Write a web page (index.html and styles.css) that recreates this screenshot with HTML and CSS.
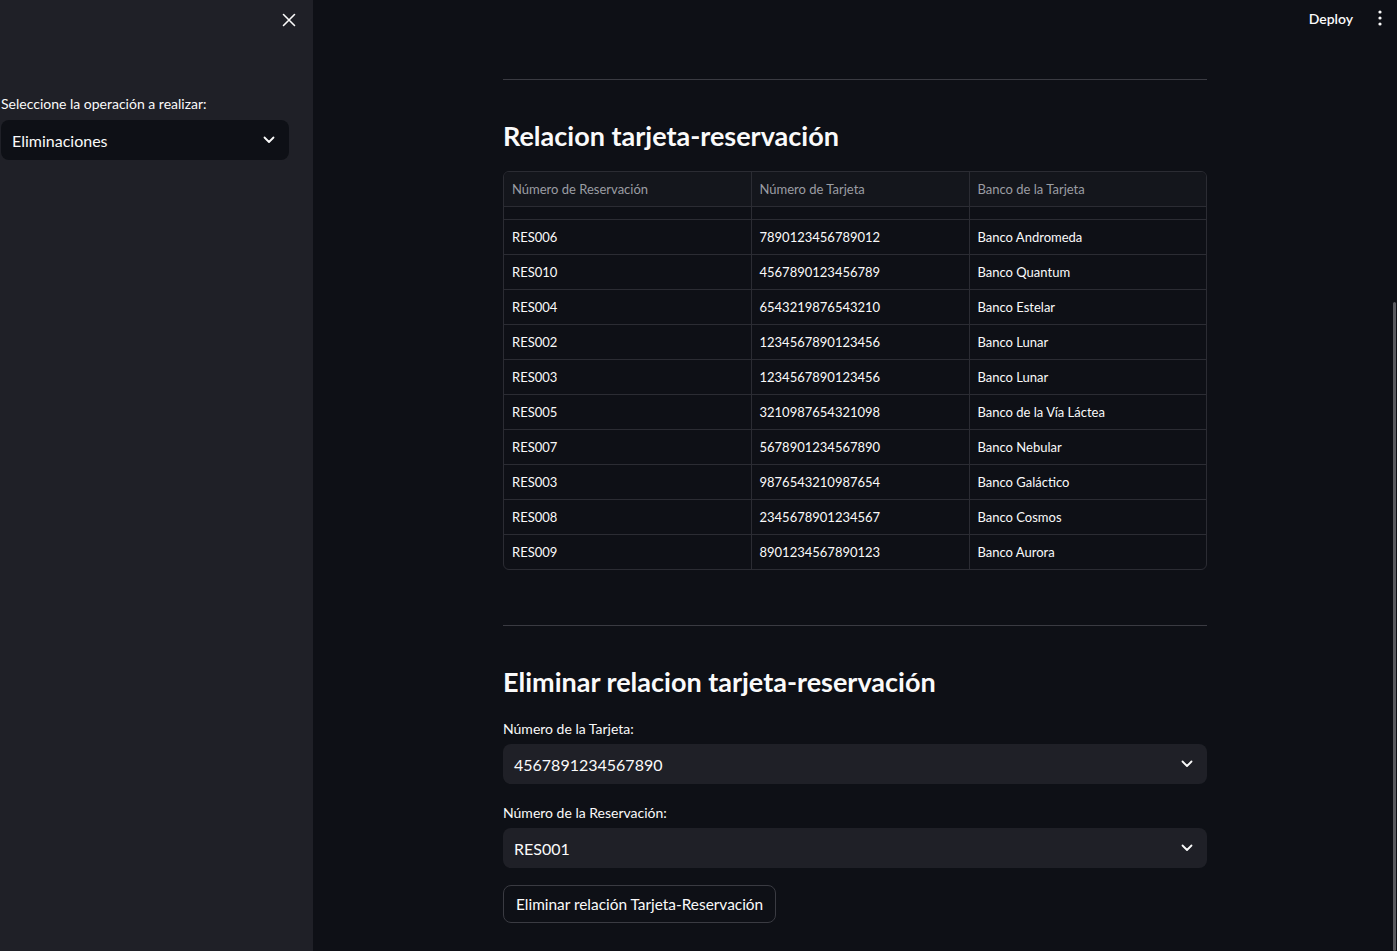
FILE: index.html
```html
<!DOCTYPE html>
<html lang="es">
<head>
<meta charset="utf-8">
<title>App</title>
<link rel="stylesheet" href="styles.css">
</head>
<body>
<div class="app">
  <aside class="sidebar">
    <div class="sidebar-top">
      <button class="close-btn" aria-label="Cerrar">
        <svg width="14" height="14" viewBox="0 0 14 14"><path d="M1.5 1.5L12.5 12.5M12.5 1.5L1.5 12.5" stroke="#fafafa" stroke-width="1.6" stroke-linecap="round"/></svg>
      </button>
    </div>
    <div class="sidebar-content">
      <label class="field-label">Seleccione la operación a realizar:</label>
      <div class="select select-dark">
        <span>Eliminaciones</span>
        <svg class="chev" width="12" height="8" viewBox="0 0 12 8"><path d="M1.5 1.5L6 6L10.5 1.5" stroke="#fafafa" stroke-width="1.8" fill="none" stroke-linecap="round" stroke-linejoin="round"/></svg>
      </div>
    </div>
  </aside>
  <main class="main">
    <header class="topbar">
      <span class="deploy">Deploy</span>
      <svg class="kebab" width="4" height="16" viewBox="0 0 4 16"><circle cx="2" cy="2" r="1.6" fill="#fafafa"/><circle cx="2" cy="8" r="1.6" fill="#fafafa"/><circle cx="2" cy="14" r="1.6" fill="#fafafa"/></svg>
    </header>
    <div class="content">
      <hr class="divider first">
      <h3 class="heading">Relacion tarjeta-reservación</h3>
      <div class="table-wrap">
        <table class="grid">
          <thead>
            <tr><th class="c1">Número de Reservación</th><th class="c2">Número de Tarjeta</th><th class="c3">Banco de la Tarjeta</th></tr>
          </thead>
          <tbody>
            <tr class="spacer"><td></td><td></td><td></td></tr>
            <tr><td>RES006</td><td>7890123456789012</td><td>Banco Andromeda</td></tr>
            <tr><td>RES010</td><td>4567890123456789</td><td>Banco Quantum</td></tr>
            <tr><td>RES004</td><td>6543219876543210</td><td>Banco Estelar</td></tr>
            <tr><td>RES002</td><td>1234567890123456</td><td>Banco Lunar</td></tr>
            <tr><td>RES003</td><td>1234567890123456</td><td>Banco Lunar</td></tr>
            <tr><td>RES005</td><td>3210987654321098</td><td>Banco de la Vía Láctea</td></tr>
            <tr><td>RES007</td><td>5678901234567890</td><td>Banco Nebular</td></tr>
            <tr><td>RES003</td><td>9876543210987654</td><td>Banco Galáctico</td></tr>
            <tr><td>RES008</td><td>2345678901234567</td><td>Banco Cosmos</td></tr>
            <tr class="last"><td>RES009</td><td>8901234567890123</td><td>Banco Aurora</td></tr>
          </tbody>
        </table>
      </div>
      <hr class="divider second">
      <h3 class="heading h-second">Eliminar relacion tarjeta-reservación</h3>
      <label class="field-label main-label">Número de la Tarjeta:</label>
      <div class="select select-light">
        <span>4567891234567890</span>
        <svg class="chev" width="12" height="8" viewBox="0 0 12 8"><path d="M1.5 1.5L6 6L10.5 1.5" stroke="#fafafa" stroke-width="1.8" fill="none" stroke-linecap="round" stroke-linejoin="round"/></svg>
      </div>
      <label class="field-label main-label second-label">Número de la Reservación:</label>
      <div class="select select-light">
        <span>RES001</span>
        <svg class="chev" width="12" height="8" viewBox="0 0 12 8"><path d="M1.5 1.5L6 6L10.5 1.5" stroke="#fafafa" stroke-width="1.8" fill="none" stroke-linecap="round" stroke-linejoin="round"/></svg>
      </div>
      <button class="btn">Eliminar relación Tarjeta-Reservación</button>
    </div>
    <div class="scrollbar"></div>
  </main>
</div>
</body>
</html>
```
FILE: styles.css
```css
* { box-sizing: border-box; }
html, body { margin: 0; padding: 0; height: 100%; }
body {
  background: #0e1016;
  color: #fafafa;
  font-family: "Lato", "Noto Sans", "Liberation Sans", sans-serif;
  overflow: hidden;
}
.app { display: flex; height: 951px; }
.sidebar {
  width: 313px;
  flex: 0 0 313px;
  background: #1f2027;
  padding: 0 24px 0 1px;
}
.sidebar-top {
  height: 40px;
  display: flex;
  justify-content: flex-end;
  align-items: center;
}
.close-btn {
  background: none;
  border: none;
  padding: 0;
  width: 24px;
  height: 24px;
  display: flex;
  align-items: center;
  justify-content: center;
  margin-right: -12px;
  cursor: pointer;
}
.sidebar-content { padding-top: 55px; }
.field-label {
  display: block;
  font-size: 14px;
  line-height: 18px;
  color: #fafafa;
  margin-bottom: 7px;
}
.select {
  height: 40px;
  border-radius: 8px;
  display: flex;
  align-items: center;
  justify-content: space-between;
  padding: 0 14px 0 11px;
  font-size: 16px;
}
.select-dark { background: #0e1016; }
.select-light { background: #1f2027; }
.chev { flex: none; }
.main {
  flex: 1;
  position: relative;
  display: flex;
  flex-direction: column;
}
.topbar {
  height: 36px;
  display: flex;
  justify-content: flex-end;
  align-items: center;
  gap: 25px;
  padding-right: 15px;
}
.deploy { font-size: 14px; font-weight: 600; }
.content {
  width: 704px;
  margin: 0 auto;
  padding-top: 43px;
}
.divider {
  border: none;
  border-top: 1px solid #3a3b42;
  margin: 0;
}
.heading {
  font-size: 27px;
  font-weight: 700;
  margin: 0;
  line-height: 40px;
  padding-top: 36px;
  padding-bottom: 15px;
}
.table-wrap {
  border: 1px solid #2b2c33;
  border-radius: 6px;
  overflow: hidden;
}
.grid {
  width: 100%;
  border-collapse: collapse;
  font-size: 13px;
}
.grid th {
  background: #14161c;
  color: #9b9da3;
  font-weight: 400;
  text-align: left;
  height: 34px;
  padding: 0 8px;
  border-right: 1px solid #2b2c33;
  border-bottom: 1px solid #2b2c33;
}
.grid th:last-child, .grid td:last-child { border-right: none; }
.grid td {
  height: 35px;
  padding: 0 8px;
  border-right: 1px solid #2b2c33;
  border-bottom: 1px solid #2b2c33;
  color: #fafafa;
}
.grid tr.spacer td { height: 13px; }
.grid tr.last td { border-bottom: none; }
.c1 { width: 247px; }
.c2 { width: 218px; }
.divider.second { margin-top: 55px; }
.h-second { padding-top: 36px; padding-bottom: 14px; }
.main-label { margin-top: 4px; margin-bottom: 6px; }
.second-label { margin-top: 20px; }
.btn {
  margin-top: 17px;
  background: #0e1016;
  color: #fafafa;
  border: 1px solid #3a3b42;
  border-radius: 8px;
  height: 38px;
  padding: 0 12px;
  font-family: inherit;
  font-size: 15.4px;
}
.scrollbar {
  position: absolute;
  right: 1px;
  top: 302px;
  width: 3px;
  bottom: 0;
  background: #5a5b60;
  border-radius: 2px;
}
```
